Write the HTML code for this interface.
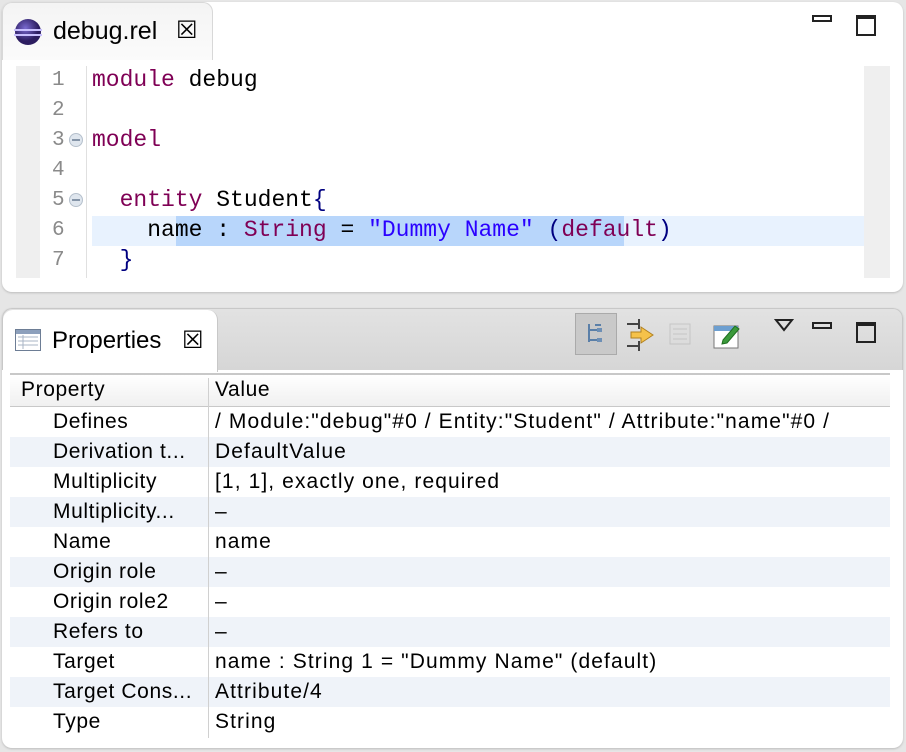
<!DOCTYPE html>
<html><head><style>
*{margin:0;padding:0;box-sizing:border-box}
body{width:906px;height:752px;background:#e6e6e6;position:relative;overflow:hidden;font-family:"Liberation Sans",sans-serif}
.abs{position:absolute}
.mono{font-family:"Liberation Mono",monospace;font-size:23px}
.ln{position:absolute;left:52px;width:20px;color:#8a8a8a;font-family:"Liberation Mono",monospace;font-size:21px}
.code{position:absolute;left:92px;white-space:pre;line-height:30px}
.kw{color:#7f0055}.st{color:#2a00ff}.br{color:#000080}
.row{position:absolute;left:10px;width:880px;height:30px;font-size:21px;letter-spacing:1.1px;line-height:30px;white-space:nowrap}
.row.s{background:#eff3f9}
.row .p{position:absolute;left:43px;letter-spacing:0.6px}
.row .v{position:absolute;left:205px}
</style></head><body>
<div class="abs" style="left:2px;top:2px;width:901px;height:290px;background:#fff;border-radius:10px;box-shadow:0 1px 2px #bbb"></div>
<div class="abs" style="left:2px;top:2px;width:211px;height:58px;background:linear-gradient(#f4f4f4,#fbfbfb);border-radius:10px 10px 0 0;border:1px solid #d8d8d8;border-bottom:none"></div>
<svg class="abs" style="left:12px;top:17px" width="32" height="30"><defs><radialGradient id="g" cx="0.4" cy="0.35"><stop offset="0" stop-color="#7a6ad0"/><stop offset="1" stop-color="#2c1d60"/></radialGradient></defs><ellipse cx="16" cy="15" rx="13" ry="13" fill="url(#g)"/><rect x="2" y="12" width="28" height="2" fill="#c9c0ff"/><rect x="2" y="17" width="28" height="2" fill="#c9c0ff"/></svg>
<div class="abs" style="left:53px;top:17px;font-size:25px">debug.rel</div>
<div class="abs" style="left:176px;top:16px;font-size:24px">&#x2612;</div>
<div class="abs" style="left:812px;top:15px;width:20px;height:7px;border:2px solid #222"></div>
<div class="abs" style="left:856px;top:15px;width:20px;height:21px;border:2px solid #222;border-top-width:4px"></div>
<div class="abs" style="left:16px;top:66px;width:24px;height:212px;background:#efefef"></div>
<div class="abs" style="left:86px;top:66px;width:1px;height:212px;background:#e0e0e0"></div>
<div class="abs" style="left:864px;top:66px;width:26px;height:212px;background:#efefef"></div>
<div class="abs" style="left:92px;top:216px;width:772px;height:30px;background:#e8f2fe"></div>
<div class="abs" style="left:176px;top:216px;width:448px;height:30px;background:#b8d6fb"></div>
<div class="ln" style="top:66px;line-height:30px">1<br>2<br>3<br>4<br>5<br>6<br>7</div>
<div class="abs" style="left:69px;top:133px;width:14px;height:14px;border-radius:50%;background:#dfe6ee;border:1px solid #b5c0cc"></div>
<div class="abs" style="left:69px;top:193px;width:14px;height:14px;border-radius:50%;background:#dfe6ee;border:1px solid #b5c0cc"></div>
<div class="abs" style="left:72px;top:139px;width:8px;height:2px;background:#8595a8"></div>
<div class="abs" style="left:72px;top:199px;width:8px;height:2px;background:#8595a8"></div>
<div class="code mono" style="top:65px"><span class="kw">module</span> debug

<span class="kw">model</span>

  <span class="kw">entity</span> Student<span class="br">{</span>
    name : <span class="kw">String</span> = <span class="st">"Dummy Name"</span> <span class="br">(</span><span class="kw">default</span><span class="br">)</span>
  <span class="br">}</span></div>
<div class="abs" style="left:2px;top:308px;width:901px;height:440px;background:#fff;border-radius:10px;box-shadow:0 1px 2px #bbb"></div>
<div class="abs" style="left:2px;top:308px;width:901px;height:62px;background:linear-gradient(#e2e2e2,#d6d6d6);border-radius:10px 10px 0 0;border:1px solid #c8c8c8;border-bottom:none"></div>
<div class="abs" style="left:3px;top:310px;width:215px;height:62px;background:#fff;border-radius:10px 10px 0 0;border-right:1px solid #c8c8c8"></div>
<svg class="abs" style="left:15px;top:329px" width="26" height="22"><rect x="0.5" y="0.5" width="25" height="21" fill="#fff" stroke="#6d7d95"/><rect x="1" y="1" width="24" height="4" fill="#8da0bc"/><g stroke="#a8b4c6"><line x1="3" y1="8" x2="23" y2="8"/><line x1="3" y1="12" x2="23" y2="12"/><line x1="3" y1="16" x2="23" y2="16"/><line x1="8" y1="6" x2="8" y2="20"/></g></svg>
<div class="abs" style="left:52px;top:327px;font-size:24px">Properties</div>
<div class="abs" style="left:182px;top:326px;font-size:24px">&#x2612;</div>
<div class="abs" style="left:575px;top:313px;width:42px;height:42px;background:#c9c9c9;border:1px solid #aaa"></div>
<svg class="abs" style="left:585px;top:322px" width="22" height="24"><g stroke="#5a7fa8" stroke-width="2" fill="none"><line x1="4" y1="2" x2="4" y2="20"/><line x1="4" y1="8" x2="12" y2="8"/><line x1="4" y1="18" x2="12" y2="18"/><line x1="10" y1="3" x2="16" y2="3"/></g><rect x="12" y="6" width="5" height="4" fill="#6d8fb5"/><rect x="12" y="16" width="5" height="4" fill="#6d8fb5"/></svg>
<svg class="abs" style="left:625px;top:318px" width="32" height="34"><g stroke="#444" stroke-width="2"><line x1="2" y1="6" x2="14" y2="6"/><line x1="14" y1="1" x2="14" y2="11"/><line x1="2" y1="28" x2="14" y2="28"/><line x1="14" y1="23" x2="14" y2="33"/></g><path d="M6 14h10v-5l12 8-12 8v-5H6z" fill="#f5c24a" stroke="#b08020"/></svg>
<svg class="abs" style="left:668px;top:322px" width="28" height="28" opacity="0.35"><rect x="2" y="2" width="20" height="20" fill="#ddd" stroke="#999"/><g stroke="#999"><line x1="5" y1="7" x2="19" y2="7"/><line x1="5" y1="12" x2="19" y2="12"/><line x1="5" y1="17" x2="19" y2="17"/></g></svg>
<svg class="abs" style="left:711px;top:318px" width="32" height="32"><rect x="3" y="8" width="24" height="22" fill="#fff" stroke="#777"/><rect x="3" y="8" width="24" height="5" fill="#6d9fd0"/><path d="M12 22l12-14 4 3-12 14-5 1z" fill="#3b9a3b" stroke="#1f6f1f"/></svg>
<svg class="abs" style="left:774px;top:318px" width="20" height="14"><path d="M2 2h16l-8 10z" fill="none" stroke="#222" stroke-width="2"/></svg>
<div class="abs" style="left:812px;top:322px;width:20px;height:7px;border:2px solid #222"></div>
<div class="abs" style="left:856px;top:322px;width:20px;height:21px;border:2px solid #222;border-top-width:4px"></div>
<div class="abs" style="left:10px;top:373px;width:880px;height:2px;background:#c8c8c8"></div>
<div class="abs" style="left:10px;top:375px;width:880px;height:32px;background:linear-gradient(#fff,#f0f0f0);border-bottom:1px solid #c8c8c8"></div>
<div class="abs" style="left:21px;top:376px;font-size:21px;letter-spacing:0.6px;line-height:28px">Property</div>
<div class="abs" style="left:215px;top:376px;font-size:21px;letter-spacing:0.6px;line-height:28px">Value</div>
<div class="row" style="top:407px"><span class="p">Defines</span><span class="v">/ Module:"debug"#0 / Entity:"Student" / Attribute:"name"#0 /</span></div>
<div class="row s" style="top:437px"><span class="p">Derivation t...</span><span class="v">DefaultValue</span></div>
<div class="row" style="top:467px"><span class="p">Multiplicity</span><span class="v">[1, 1], exactly one, required</span></div>
<div class="row s" style="top:497px"><span class="p">Multiplicity...</span><span class="v">–</span></div>
<div class="row" style="top:527px"><span class="p">Name</span><span class="v">name</span></div>
<div class="row s" style="top:557px"><span class="p">Origin role</span><span class="v">–</span></div>
<div class="row" style="top:587px"><span class="p">Origin role2</span><span class="v">–</span></div>
<div class="row s" style="top:617px"><span class="p">Refers to</span><span class="v">–</span></div>
<div class="row" style="top:647px"><span class="p">Target</span><span class="v">name : String 1 = "Dummy Name" (default)</span></div>
<div class="row s" style="top:677px"><span class="p">Target Cons...</span><span class="v">Attribute/4</span></div>
<div class="row" style="top:707px"><span class="p">Type</span><span class="v">String</span></div>
<div class="abs" style="left:208px;top:378px;width:1px;height:360px;background:#d0d0d0"></div>
</body></html>
